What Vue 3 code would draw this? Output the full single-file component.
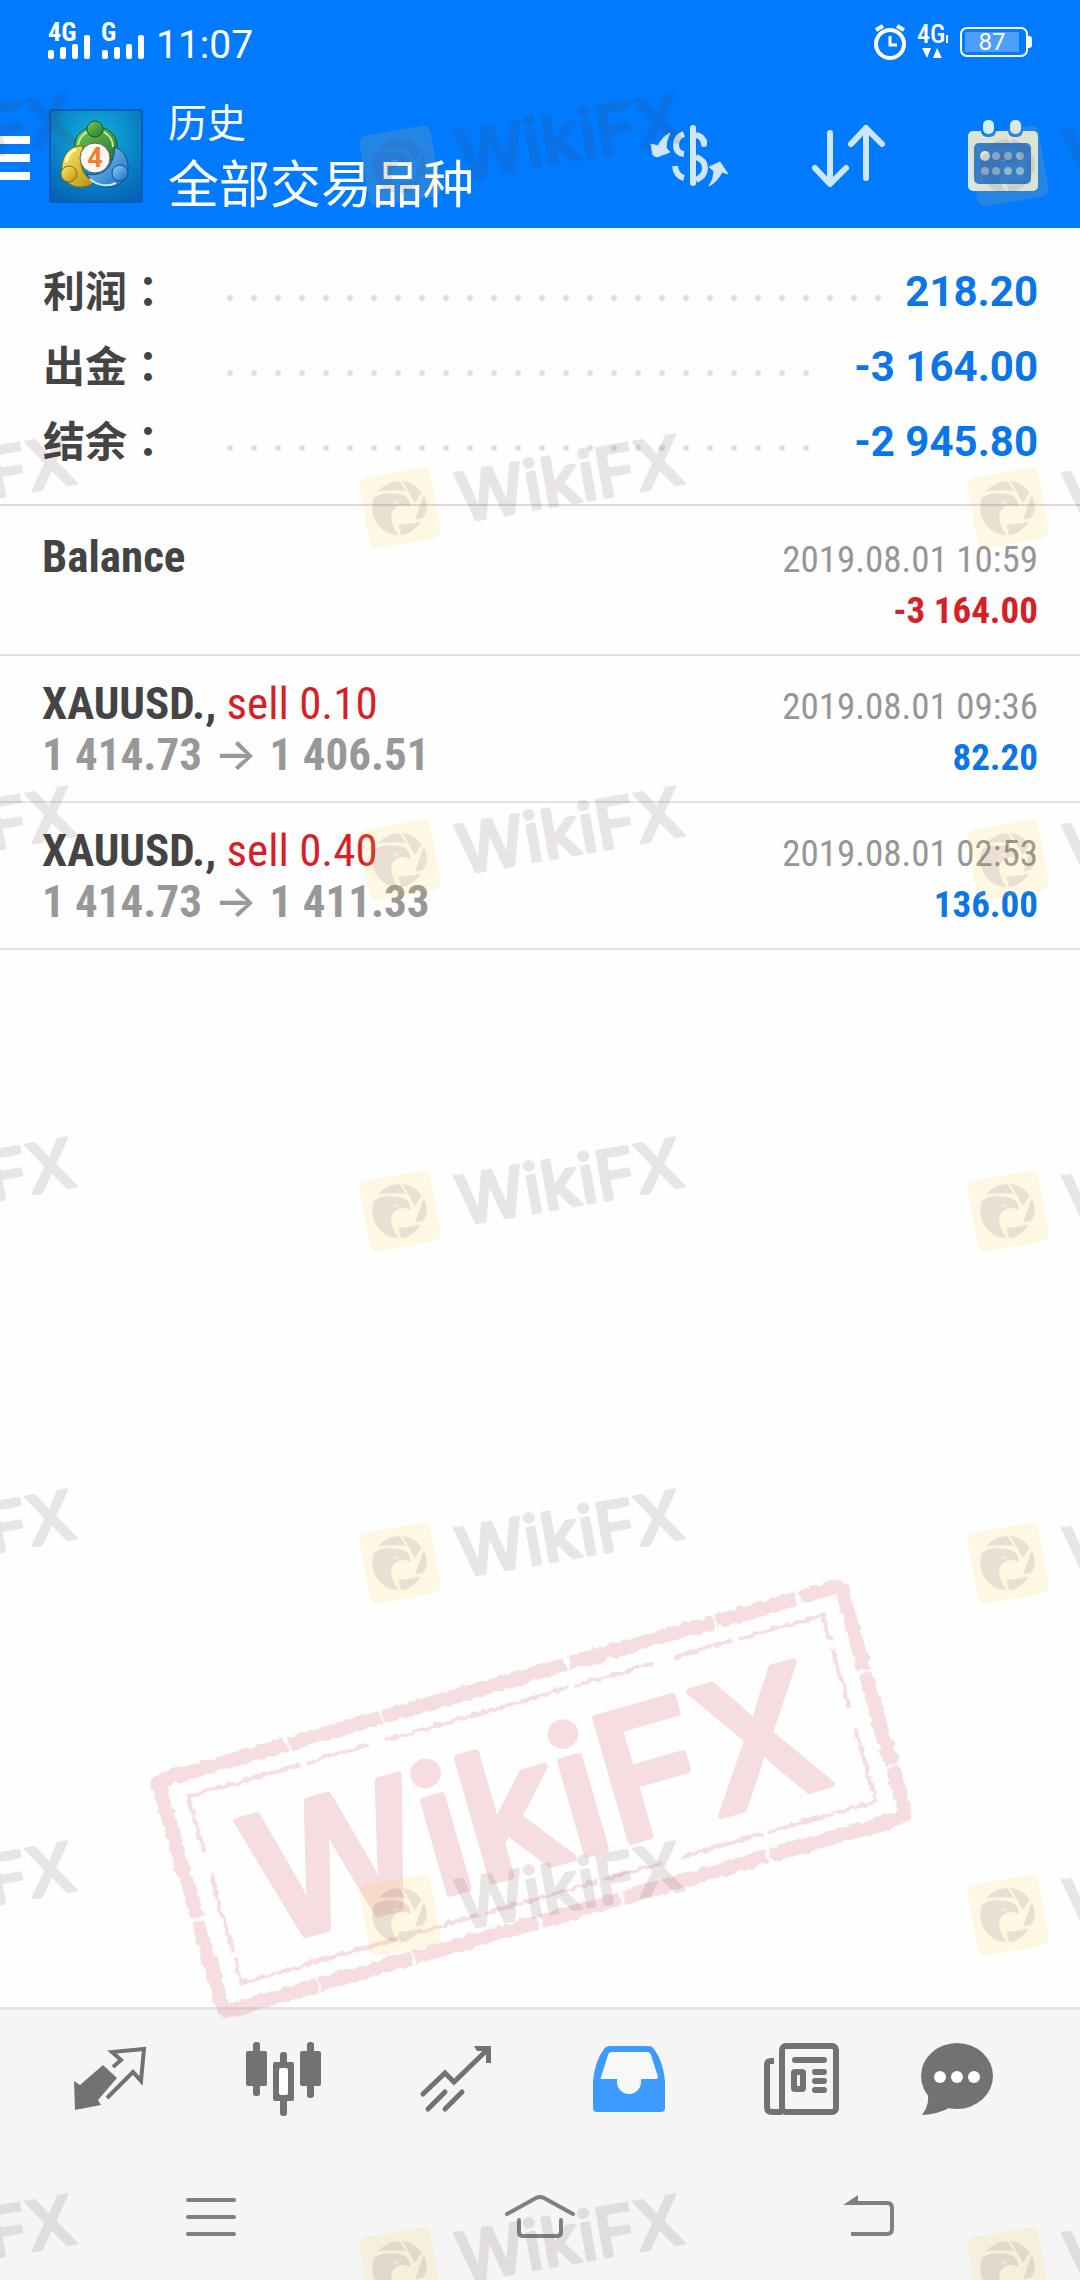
<script setup>
const summary = [
  { label: '利润', value: '218.20', wide: false },
  { label: '出金', value: '-3 164.00', wide: true },
  { label: '结余', value: '-2 945.80', wide: true },
]

const deals = [
  { name: 'Balance', side: '', from: '', to: '', time: '2019.08.01 10:59', amount: '-3 164.00', loss: true },
  { name: 'XAUUSD.,', side: 'sell 0.10', from: '1 414.73', to: '1 406.51', time: '2019.08.01 09:36', amount: '82.20', loss: false },
  { name: 'XAUUSD.,', side: 'sell 0.40', from: '1 414.73', to: '1 411.33', time: '2019.08.01 02:53', amount: '136.00', loss: false },
]

const markRows = [166, 508, 860, 1211, 1563, 1915, 2268]
const markCols = [-208, 400, 1008]
const marks = markRows.flatMap((y) => markCols.map((x) => ({ x, y })))
</script>

<template>
  <div class="screen">
    <header class="top">
      <div class="status">
        <div class="status-side">
          <svg width="96" height="38" viewBox="0 0 96 38" fill="#fff" aria-hidden="true">
            <text x="0" y="18" class="net">4G</text>
            <rect x="0" y="27" width="6" height="9" rx="2" />
            <rect x="12" y="24" width="6" height="12" rx="2" />
            <rect x="24" y="21" width="6" height="15" rx="2" />
            <rect x="36" y="12" width="6" height="24" rx="2" />
            <text x="53" y="18" class="net">G</text>
            <rect x="54" y="27" width="6" height="9" rx="2" />
            <rect x="66" y="24" width="6" height="12" rx="2" />
            <rect x="78" y="21" width="6" height="15" rx="2" />
            <rect x="90" y="12" width="6" height="24" rx="2" />
          </svg>
          <span class="clock">11:07</span>
        </div>
        <div class="status-side right">
          <svg width="32" height="36" viewBox="0 0 32 36" fill="none" stroke="#fff" aria-hidden="true">
            <circle cx="16" cy="20" r="14" stroke-width="4" />
            <path d="M16 12v9h7" stroke-width="3" />
            <path d="M2 6l7-4M30 6l-7-4" stroke-width="4" />
          </svg>
          <svg width="34" height="36" viewBox="0 0 34 36" fill="#fff" aria-hidden="true">
            <text x="1" y="19" class="net light">4G</text>
            <rect x="30" y="11" width="2" height="8" />
            <path d="M6 24h9l-4 10zM17 34h9l-5-10z" />
          </svg>
          <div class="battery"><span>87</span></div>
        </div>
      </div>
      <div class="bar">
        <button class="menu" aria-label="Menu"><i></i><i></i><i></i></button>
        <svg class="app-logo" width="94" height="94" viewBox="0 0 94 94" aria-hidden="true">
          <defs>
            <radialGradient id="lg-bg" cx=".5" cy=".3" r=".8"><stop offset="0" stop-color="#12b4dc" /><stop offset=".5" stop-color="#0a8ac8" /><stop offset="1" stop-color="#0560b4" /></radialGradient>
            <linearGradient id="lg-g" x1="0" y1="0" x2="1" y2="1"><stop offset="0" stop-color="#7cc85a" /><stop offset="1" stop-color="#1f7a2c" /></linearGradient>
            <linearGradient id="lg-y" x1="0" y1="0" x2="1" y2="1"><stop offset="0" stop-color="#fff06a" /><stop offset="1" stop-color="#b98e10" /></linearGradient>
            <linearGradient id="lg-b" x1="0" y1="0" x2="1" y2="1"><stop offset="0" stop-color="#8fd4f8" /><stop offset="1" stop-color="#1568c0" /></linearGradient>
          </defs>
          <rect x="1" y="1" width="92" height="92" rx="2" fill="url(#lg-bg)" stroke="#0a5cb8" stroke-width="2" />
          <path d="M27 42c-5-12 5-24 20-24s26 12 19 29c-3 8-10 2-20-2-9-3-16 5-19-3z" fill="url(#lg-g)" stroke="#0c5e22" />
          <path d="M29 36c1-7 6-12 11-14M64 38c0-7-4-12-9-15" fill="none" stroke="#c6efb0" stroke-width="2" />
          <path d="M34 37c-12-1-21 9-21 22 0 12 9 20 20 19 8-1 11-3 11-6-8-4-12-11-12-20z" fill="url(#lg-y)" stroke="#8c6c0c" />
          <path d="M17 53q2-10 10-13" fill="none" stroke="#fffbc0" stroke-width="3" />
          <path d="M66 38c8 3 14 12 13 23-1 11-10 18-20 17-9 0-17-7-22-13 14 3 27-3 29-27z" fill="url(#lg-b)" stroke="#0a4f98" />
          <path d="M41 70c8 7 18 8 26 4" fill="none" stroke="#c8ecff" stroke-width="2" />
          <circle cx="46" cy="20" r="8" fill="url(#lg-g)" stroke="#0c5e22" />
          <circle cx="20" cy="65" r="8" fill="url(#lg-y)" stroke="#8c6c0c" />
          <circle cx="71" cy="64" r="8" fill="url(#lg-b)" stroke="#0a4f98" />
          <circle cx="46" cy="49" r="15" fill="#fbf8f4" stroke="#6a5a50" />
          <text x="46" y="58" text-anchor="middle" class="four">4</text>
        </svg>
        <div class="titles">
          <h1>历史</h1>
          <p>全部交易品种</p>
        </div>
        <div class="actions">
          <button aria-label="Currency">
            <svg width="80" height="62" viewBox="0 0 80 62" fill="none" stroke="#cfe6f8" stroke-width="6">
              <path d="M43 3v55" stroke-linecap="round" />
              <path d="M34 9q-8 3-8 11t8 9M46 10q7 1 8 9M46 32q9 3 9 11t-9 12M25 41q1 10 9 12" />
              <path d="M54 16v3" stroke-linecap="round" />
              <path d="M1 19l7 2q4-9 12-13-4 7-4 15l4 4-13 5-4-2zM70 37l8 12-6-2q-5 10-13 14 5-7 5-15l-5-4z" fill="#cfe6f8" stroke-width="1" />
            </svg>
          </button>
          <button aria-label="Sort">
            <svg width="74" height="64" viewBox="0 0 74 64" fill="none" stroke="#cfe6f8" stroke-width="6" stroke-linecap="round" stroke-linejoin="round">
              <path d="M18 9v50M3 44l15 16 16-16M54 4v50M39 20L54 4l16 16" />
            </svg>
          </button>
          <button aria-label="Calendar">
            <svg width="70" height="72" viewBox="0 0 70 72">
              <rect x="0" y="11" width="70" height="60" rx="5" fill="#d9e6ea" />
              <rect x="6" y="23" width="57" height="41" rx="5" fill="#1672dc" />
              <rect x="13" y="-1" width="15" height="18" rx="6" fill="#007aff" />
              <rect x="40" y="-1" width="15" height="18" rx="6" fill="#007aff" />
              <rect x="15" y="0" width="11" height="14" rx="5" fill="#d4ecfa" />
              <rect x="42" y="0" width="11" height="14" rx="5" fill="#dfe6e6" />
              <g fill="#7fb2e4"><circle cx="28" cy="36" r="4" /><circle cx="40" cy="36" r="4" /><circle cx="52" cy="36" r="4" /><circle cx="17" cy="51" r="4" /><circle cx="28" cy="51" r="4" /><circle cx="40" cy="51" r="4" /><circle cx="52" cy="51" r="4" /></g>
              <circle cx="17" cy="36" r="5" fill="#dceaf2" />
            </svg>
          </button>
        </div>
      </div>
    </header>

    <main>
      <section class="summary">
        <div v-for="row in summary" :key="row.label" class="sum-row">
          <span class="label">{{ row.label }}<span class="colon">：</span></span>
          <span class="dots"></span>
          <span class="value" :class="{ wide: row.wide }">{{ row.value }}</span>
        </div>
      </section>
      <ul class="deals">
        <li v-for="deal in deals" :key="deal.time">
          <div class="line">
            <span class="name">{{ deal.name }} <span class="side">{{ deal.side }}</span></span>
            <time>{{ deal.time }}</time>
          </div>
          <div class="line">
            <span class="price"><template v-if="deal.from">{{ deal.from }} <span class="arrow">→</span> {{ deal.to }}</template></span>
            <span class="amount" :class="{ loss: deal.loss }">{{ deal.amount }}</span>
          </div>
        </li>
      </ul>
    </main>

    <footer>
      <nav class="tabs">
        <button aria-label="Quotes">
          <svg width="73" height="64" viewBox="0 0 73 64">
            <path d="M29 18l14 13-19 22 3 5-26 5-1-29 6 4z" fill="#727272" />
            <path d="M39 20l8-7-9-8 32-3-3 32-8-9-26 26" fill="none" stroke="#727272" stroke-width="4" />
          </svg>
        </button>
        <button aria-label="Charts">
          <svg width="75" height="74" viewBox="0 0 75 74" fill="#727272">
            <rect x="0" y="9" width="21" height="35" rx="2" /><rect x="7" y="0" width="7" height="54" rx="3" />
            <rect x="54" y="9" width="21" height="35" rx="2" /><rect x="61" y="0" width="7" height="56" rx="3" />
            <rect x="27" y="20" width="21" height="39" rx="2" /><rect x="34" y="10" width="7" height="64" rx="3" />
            <rect x="33" y="26" width="9" height="27" rx="2" fill="#fff" />
          </svg>
        </button>
        <button aria-label="Trade">
          <svg width="72" height="68" viewBox="0 0 72 68" fill="none" stroke="#727272" stroke-width="5" stroke-linecap="round">
            <path d="M3 49l22-21 9 9L67 5M8 64l17-17M25 64l17-17" />
            <path d="M54 1h17v17h-5V9l-4-3h-5z" fill="#727272" stroke="none" />
          </svg>
        </button>
        <button aria-label="History" aria-current="page">
          <svg width="72" height="66" viewBox="0 0 72 66">
            <path d="M0 62V35Q2 15 11 3 13 0 17 0H55Q59 0 61 3 70 15 72 35V62Q72 66 68 66H4Q0 66 0 62Z" fill="#3d9bff" />
            <path d="M19 6H54Q57 6 58 9L65 31Q65 33 63 33H48V36A12 12 0 0 1 24 36V33H9Q7 33 8 31L15 9Q16 6 19 6Z" fill="#f8f8f8" />
          </svg>
        </button>
        <button aria-label="News">
          <svg width="75" height="72" viewBox="0 0 75 72" fill="none" stroke="#727272" stroke-width="6">
            <rect x="18" y="3" width="54" height="66" rx="4" />
            <path d="M10 18H7Q3 18 3 22V64Q3 69 8 69H18" />
            <rect x="30" y="29" width="9" height="17" rx="1" />
            <path d="M31 17h29M51 29h9M51 38h9M51 47h9" stroke-linecap="round" />
          </svg>
        </button>
        <button aria-label="Messages">
          <svg width="72" height="72" viewBox="0 0 72 72" fill="#727272">
            <ellipse cx="36" cy="33" rx="36" ry="33" />
            <path d="M6 48Q10 60 1 72 18 71 30 64z" />
            <g fill="#fff"><circle cx="19" cy="34" r="6" /><circle cx="36" cy="34" r="6" /><circle cx="53" cy="34" r="6" /></g>
          </svg>
        </button>
      </nav>
      <nav class="system">
        <button aria-label="Recent apps">
          <svg width="50" height="42" viewBox="0 0 50 42" stroke="#808080" stroke-width="4" stroke-linecap="round"><path d="M2 4h46M2 21h46M2 38h46" /></svg>
        </button>
        <button aria-label="Home">
          <svg width="70" height="44" viewBox="0 0 70 44" fill="none" stroke="#808080" stroke-width="4" stroke-linecap="round">
            <path d="M2 19L31 3q4-2 8 0l29 16M14 25v12q0 4 4 4h34q4 0 4-4V25" />
          </svg>
        </button>
        <button aria-label="Back">
          <svg width="52" height="44" viewBox="0 0 52 44" fill="none" stroke="#808080" stroke-width="4">
            <path d="M6 8h38q5 0 5 5v21q0 5-5 5H8" /><path d="M0 10L15 0v10z" fill="#808080" stroke="none" />
          </svg>
        </button>
      </nav>
    </footer>

    <svg class="marks" aria-hidden="true">
      <defs>
        <filter id="rough" x="-5%" y="-5%" width="110%" height="110%">
          <feTurbulence type="fractalNoise" baseFrequency=".12" numOctaves="3" seed="4" result="n" />
          <feDisplacementMap in="SourceGraphic" in2="n" scale="7" xChannelSelector="R" yChannelSelector="G" />
        </filter>
      </defs>
      <g transform="translate(532 1798) rotate(-16)" fill="none" stroke="#d8606e" opacity=".2">
        <g filter="url(#rough)">
          <rect x="-355" y="-119" width="710" height="240" rx="5" stroke-width="14" stroke-dasharray="128 3 96 2 190 4 150 3 82 4" />
          <rect x="-330" y="-96" width="660" height="194" stroke-width="4" stroke-dasharray="116 7 64 18 190 5 84 22 60 6" />
        </g>
        <text x="1" y="69" text-anchor="middle" class="stamp-text">WikiFX</text>
      </g>
      <g v-for="m in marks" :key="m.x + '-' + m.y" :transform="`translate(${m.x} ${m.y}) rotate(-10)`">
        <rect x="-36" y="-36" width="72" height="72" rx="8" fill="#ffcf3c" opacity=".14" />
        <g transform="rotate(10) scale(.333) translate(-134 -138)" fill="#5a3c64" opacity=".12">
          <path d="M68 88Q95 58 133 57L152 88Q110 82 68 88zM141 57Q180 62 199 93L178 122zM205 98Q226 138 203 168L180 172zM130 189L196 180Q172 215 137 221zM55 108Q75 93 108 94 145 94 160 112 168 120 164 136L150 129Q130 128 120 138 100 155 112 185 118 205 130 220 90 218 68 188 42 158 55 108z" />
          <path d="M106 122l24-5-6 8z" fill="#ffe9a0" />
        </g>
        <text x="58" y="25" class="mark-text">WikiFX</text>
      </g>
    </svg>
  </div>
</template>

<style>
body {
  margin: 0;
  background: #fefefe;
}
</style>

<style scoped>
.screen {
  position: relative;
  display: flex;
  flex-direction: column;
  min-height: 100vh;
  overflow: hidden;
  background: #fefefe;
  color: #444;
  font-family: Roboto, "Noto Sans CJK SC", sans-serif;
}
button {
  display: flex;
  align-items: center;
  justify-content: center;
  padding: 0;
  border: 0;
  background: none;
}
svg {
  display: block;
  flex: none;
  overflow: visible;
}
.top {
  background: #007aff;
  color: #fff;
}
.status {
  display: flex;
  align-items: center;
  justify-content: space-between;
  height: 84px;
  padding: 0 52px 0 48px;
}
.status-side {
  display: flex;
  align-items: center;
  gap: 12px;
}
.status-side.right {
  gap: 10px;
}
.net {
  font: 700 26px "Roboto Condensed", sans-serif;
}
.net.light {
  font-weight: 500;
}
.clock {
  padding-top: 6px;
  font-size: 39px;
  line-height: 44px;
}
.battery {
  position: relative;
  box-sizing: border-box;
  display: flex;
  width: 68px;
  height: 30px;
  padding: 3px;
  border: 2px solid #fff;
  border-radius: 7px;
}
.battery span {
  width: 54px;
  background: #4d9ffd;
  font-size: 24px;
  line-height: 21px;
  text-align: center;
}
.battery::after {
  content: "";
  position: absolute;
  top: 7px;
  right: -6px;
  width: 4px;
  height: 12px;
  border-radius: 0 3px 3px 0;
  background: #fff;
}
.bar {
  display: flex;
  align-items: center;
  height: 144px;
}
.menu {
  flex-direction: column;
  align-items: flex-start;
  gap: 10px;
  padding-top: 4px;
}
.menu i {
  width: 30px;
  height: 8px;
  background: #fff;
}
.app-logo {
  margin-left: 19px;
}
.four {
  fill: #f0802c;
  font: 700 27px Roboto, sans-serif;
}
.titles {
  margin-left: 25px;
  padding-bottom: 10px;
}
h1,
p {
  margin: 0;
  font-family: "Noto Sans CJK SC", sans-serif;
  font-weight: 400;
}
h1 {
  font-size: 39px;
  line-height: 60px;
}
p {
  font-size: 51px;
  line-height: 62px;
}
.actions {
  display: flex;
  flex: 1;
  align-items: center;
  justify-content: flex-end;
  gap: 82px;
  padding-right: 42px;
}
.summary {
  padding: 25px 42px 26px;
  border-bottom: 2px solid #dcdadb;
}
.sum-row {
  display: flex;
  align-items: center;
  height: 75px;
  font-size: 42px;
  line-height: 75px;
}
.label {
  width: 175px;
  padding: 0 0 4px 1px;
  font-family: "Noto Sans CJK SC", sans-serif;
  font-weight: 700;
}
.colon {
  font-family: "Noto Sans CJK JP", sans-serif;
}
.dots {
  flex: 1;
  height: 24px;
  background: radial-gradient(circle at 12px 19px, #dedede 2px, transparent 4px) 0 0 / 24px 24px repeat-x;
}
.value {
  padding: 2px 0 0 16px;
  color: #0a76e8;
  font-weight: 700;
}
.value.wide {
  padding-left: 40px;
}
.deals {
  margin: 0;
  padding: 3px 0 0;
  list-style: none;
  font-family: "Roboto Condensed", Roboto, sans-serif;
}
.deals li {
  padding: 22px 42px 21px;
  border-bottom: 2px solid #e2e2e2;
}
.line {
  display: grid;
  grid-template-columns: 1fr auto;
  align-items: baseline;
  height: 51px;
  line-height: 51px;
}
.name,
.price {
  font-size: 45px;
  font-weight: 700;
}
/* keeps a baseline in rows that have no price */
.price::before {
  content: "";
  display: inline-block;
  height: 40px;
}
.side {
  color: #d81e26;
  font-weight: 400;
}
.price {
  color: #989898;
}
.arrow {
  padding: 0 2px;
  font-family: Inter, sans-serif;
  font-weight: 500;
  line-height: 40px;
}
time {
  color: #969696;
  font-size: 37px;
}
.amount {
  color: #0a76e8;
  font-size: 37px;
  font-weight: 700;
}
.amount.loss {
  color: #d81e26;
}
footer {
  margin-top: auto;
  border-top: 3px solid #e4e4e4;
  background: #f5f5f5;
}
.tabs {
  display: flex;
  height: 138px;
  padding: 0 54px 6px 24px;
}
.tabs button {
  flex: 5;
}
.tabs button:last-child {
  flex: 4;
}
.system {
  display: flex;
  height: 126px;
  padding: 0 46px;
}
.system button {
  flex: 1;
}
.marks {
  position: absolute;
  inset: 0;
  width: 100%;
  height: 100%;
  overflow: hidden;
  pointer-events: none;
}
.mark-text {
  fill: #5a3c3c;
  stroke: #5a3c3c;
  stroke-width: 3px;
  stroke-linejoin: round;
  opacity: 0.12;
  font: 500 68px Inter, sans-serif;
}
.stamp-text {
  fill: #d8606e;
  stroke-width: 7px;
  stroke-linejoin: round;
  font: 500 176px Inter, sans-serif;
}
</style>
